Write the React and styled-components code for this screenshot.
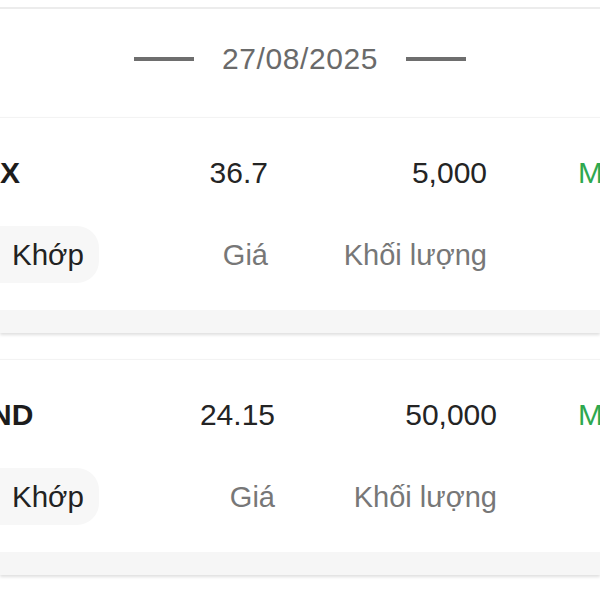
import React from "react";
import styled, { createGlobalStyle } from "styled-components";

const GlobalStyle = createGlobalStyle`
  html, body {
    margin: 0;
    padding: 0;
    background: #ffffff;
  }
  body {
    width: 600px;
    height: 600px;
    overflow: hidden;
    font-family: "Liberation Sans", Arial, Helvetica, sans-serif;
  }
`;

const Screen = styled.div`
  width: 600px;
  height: 600px;
  overflow: hidden;
  background: #fff;
`;

const PrevEdge = styled.div`
  height: 7px;
  border-bottom: 2px solid #ececec;
`;

const DateHeader = styled.div`
  display: flex;
  align-items: center;
  justify-content: center;
  gap: 28px;
  padding: 33px 0 41px;
`;

const Dash = styled.span`
  display: block;
  width: 60px;
  height: 4px;
  background: #6e6e6e;
`;

const DateText = styled.span`
  font-size: 30px;
  line-height: 34px;
  color: #6a6a6a;
  letter-spacing: 0.6px;
`;

const Card = styled.section`
  border-top: 1px solid #f3f3f3;
  background: #fff;
  box-shadow: 0 2px 3px rgba(0, 0, 0, 0.13);
  margin-bottom: 26px;
`;

const Row = styled.div`
  display: grid;
  grid-template-columns: 150px ${({ $price }) => $price - 150}px ${({ $price, $vol }) => $vol - $price}px 1fr;
  align-items: center;
  white-space: nowrap;
`;

const ValueRow = styled(Row)`
  padding-top: 38px;
  height: 34px;
  margin-bottom: 36px;
  font-size: 30px;
  line-height: 34px;
`;

const LabelRow = styled(Row)`
  height: 57px;
  margin-bottom: 27px;
  font-size: 29px;
  line-height: 34px;
`;

const Ticker = styled.span`
  font-weight: bold;
  color: #1c1c1c;
  margin-left: ${({ $cut }) => -$cut}px;
`;

const Num = styled.span`
  text-align: right;
  color: #242424;
`;

const Side = styled.span`
  color: #2ea84f;
  padding-left: ${({ $vol }) => 578 - $vol}px;
`;

const Pill = styled.span`
  justify-self: start;
  display: flex;
  align-items: center;
  height: 57px;
  margin-left: -20px;
  padding: 0 15px 0 32px;
  border-radius: 22px;
  background: #f7f7f7;
  color: #222;
  font-size: 29.5px;
`;

const Label = styled.span`
  text-align: right;
  color: #777;
`;

const Footer = styled.div`
  height: 23px;
  background: #f6f6f6;
`;

const trades = [
  { ticker: "X", cut: 0, price: "36.7", volume: "5,000", priceEnd: 268, volEnd: 487 },
  { ticker: "ND", cut: 10, price: "24.15", volume: "50,000", priceEnd: 275, volEnd: 497 },
];

const TradeCard = ({ t }) => (
  <Card>
    <ValueRow $price={t.priceEnd} $vol={t.volEnd}>
      <Ticker $cut={t.cut}>{t.ticker}</Ticker>
      <Num>{t.price}</Num>
      <Num>{t.volume}</Num>
      <Side $vol={t.volEnd}>M</Side>
    </ValueRow>
    <LabelRow $price={t.priceEnd} $vol={t.volEnd}>
      <Pill>Khớp</Pill>
      <Label>Giá</Label>
      <Label>Khối lượng</Label>
      <span />
    </LabelRow>
    <Footer />
  </Card>
);

export default function App() {
  return (
    <Screen>
      <GlobalStyle />
      <PrevEdge />
      <DateHeader>
        <Dash />
        <DateText>27/08/2025</DateText>
        <Dash />
      </DateHeader>
      {trades.map((t) => (
        <TradeCard key={t.ticker} t={t} />
      ))}
    </Screen>
  );
}
